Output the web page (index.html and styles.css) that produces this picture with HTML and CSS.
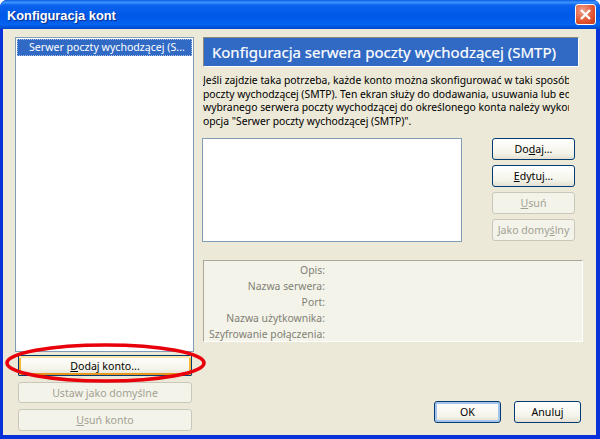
FILE: index.html
```html
<!DOCTYPE html>
<html lang="pl">
<head>
<meta charset="utf-8">
<title>Konfiguracja kont</title>
<link rel="stylesheet" href="styles.css">
</head>
<body>
<div class="window">
  <header class="titlebar">
    <span class="title">Konfiguracja kont</span>
    <span class="close"><svg width="13" height="13" viewBox="0 0 13 13"><path d="M2 2 L11 11 M11 2 L2 11" stroke="#fff" stroke-width="2.4" fill="none"/></svg></span>
  </header>
  <main class="client">
    <aside class="left">
      <div class="list"><div class="list-item">Serwer poczty wychodzącej (S...</div></div>
      <div class="left-buttons">
        <button class="btn focus-orange"><u>D</u>odaj konto...</button>
        <button class="btn disabled">Ustaw <u>j</u>ako domyślne</button>
        <button class="btn disabled tall"><u>U</u>suń konto</button>
      </div>
    </aside>
    <section class="right">
      <h1 class="heading">Konfiguracja serwera poczty wychodzącej (SMTP)</h1>
      <div class="desc">
        <p>Jeśli zajdzie taka potrzeba, każde konto można skonfigurować w taki sposób,</p>
        <p>poczty wychodzącej (SMTP). Ten ekran służy do dodawania, usuwania lub edycji</p>
        <p>wybranego serwera poczty wychodzącej do określonego konta należy wykorzystać</p>
        <p>opcja "Serwer poczty wychodzącej (SMTP)".</p>
      </div>
      <div class="servers">
        <div class="server-list"></div>
        <div class="server-buttons">
          <button class="btn small">Do<u>d</u>aj...</button>
          <button class="btn small"><u>E</u>dytuj...</button>
          <button class="btn small disabled"><u>U</u>suń</button>
          <button class="btn small disabled">Jako domy<u>ś</u>lny</button>
        </div>
      </div>
      <dl class="info">
        <dt>Opis:</dt><dd></dd>
        <dt>Nazwa serwera:</dt><dd></dd>
        <dt>Port:</dt><dd></dd>
        <dt>Nazwa użytkownika:</dt><dd></dd>
        <dt>Szyfrowanie połączenia:</dt><dd></dd>
      </dl>
      <div class="dialog-buttons">
        <button class="btn wide default">OK</button>
        <button class="btn wide">Anuluj</button>
      </div>
    </section>
  </main>
  <svg class="ring" width="206" height="44" viewBox="0 0 206 44"><ellipse cx="104.5" cy="22" rx="98.5" ry="18" fill="none" stroke="#e8000b" stroke-width="3.6"/></svg>
</div>
</body>
</html>
```

FILE: styles.css
```css
* { box-sizing: border-box; }
html, body { margin: 0; padding: 0; }
body { width: 600px; height: 439px; overflow: hidden; font-family: "Noto Sans", "Liberation Sans", sans-serif; font-size: 11px; color: #000; }
.window { position: relative; width: 600px; height: 439px; display: flex; flex-direction: column; background: #0831d9; border-radius: 7px 7px 0 0; overflow: hidden; }
.titlebar { height: 29px; flex: none; display: flex; align-items: center; justify-content: space-between; padding: 0 4px 0 7px; background: linear-gradient(180deg, #0a5be0 0%, #3d95ff 8%, #0a63ee 18%, #0058e8 55%, #0463f0 85%, #0047c8 100%); }
.title { color: #fff; font: bold 12.8px "Liberation Sans", sans-serif; padding-top: 2px; text-shadow: 1px 1px 1px #0a2a8c; }
.close { width: 21px; height: 21px; display: flex; align-items: center; justify-content: center; border: 1px solid #fff; border-radius: 3px; background: radial-gradient(circle at 35% 30%, #f0a08a, #e2542f 60%, #c23a1c); }
.client { flex: 1; margin: 0 4px 4px 3px; background: #ece9d8; display: flex; padding: 8px 0 0 12px; }
.left { width: 179px; flex: none; display: flex; flex-direction: column; }
.list { width: 179px; height: 315px; background: #fff; border: 1px solid #7f9db9; padding: 1px; }
.list-item { height: 17px; line-height: 16px; padding-left: 12px; background: #316ac5; color: #fff; white-space: nowrap; outline: 1px dotted #a9bfe6; outline-offset: -1px; font-size: 10.6px; }
.left-buttons { display: flex; flex-direction: column; gap: 6px; padding: 3px 2px 0 3px; }
.btn { font: inherit; font-size: 10.6px; padding: 0; height: 21px; color: #000; border: 1px solid #003c74; border-radius: 3px; background: linear-gradient(180deg, #fff 0%, #f5f4ea 70%, #e3e0d2 100%); white-space: nowrap; }
.btn.disabled { color: #a1a192; border-color: #c9c7ba; background: #f4f3ea; }
.btn.tall { height: 22px; }
.btn.focus-orange { box-shadow: inset 0 2px 0 #fde5a8, inset 2px 0 0 #f8b636, inset -2px 0 0 #f8b636, inset 0 -2px 0 #e5971f; border-radius: 1px; }
.right { width: 380px; margin-left: 9px; flex: none; display: flex; flex-direction: column; }
.heading { margin: 0; width: 376px; height: 30px; line-height: 28px; padding-left: 8px; background: #316ac5; color: #fff; font-size: 15px; font-weight: 400; border: 1px solid; border-color: #8a8a7e #fff #fff #8a8a7e; white-space: nowrap; -webkit-text-stroke: 0.2px #fff; }
.desc { margin-top: 7px; width: 366px; overflow: hidden; white-space: nowrap; line-height: 13.5px; font-size: 10.35px; }
.desc p { margin: 0; }
.servers { display: flex; margin-top: 10px; }
.server-list { width: 260px; height: 104px; background: #fff; border: 1px solid #7f9db9; margin-left: -1px; }
.server-buttons { width: 83px; margin-left: 30px; display: flex; flex-direction: column; gap: 5px; }
.btn.small { height: 22px; }
.info { margin: 18px 0 0; width: 380px; height: 82px; background: #f4f3ea; border: 1px solid; border-color: #aca899 #fff #fff #aca899; padding: 2px 0 0; display: grid; grid-template-columns: 121px 1fr; grid-auto-rows: 16px; color: #808073; font-size: 10.4px; line-height: 15px; }
.info dt { text-align: right; white-space: nowrap; }
.info dd { margin: 0; }
.dialog-buttons { display: flex; justify-content: flex-end; gap: 13px; margin-top: 59px; padding-right: 2px; }
.btn.wide { width: 67px; height: 22px; }
.btn.default { box-shadow: inset 0 0 0 2px #a6c3ec; }
.ring { position: absolute; left: 1px; top: 341px; }
```
